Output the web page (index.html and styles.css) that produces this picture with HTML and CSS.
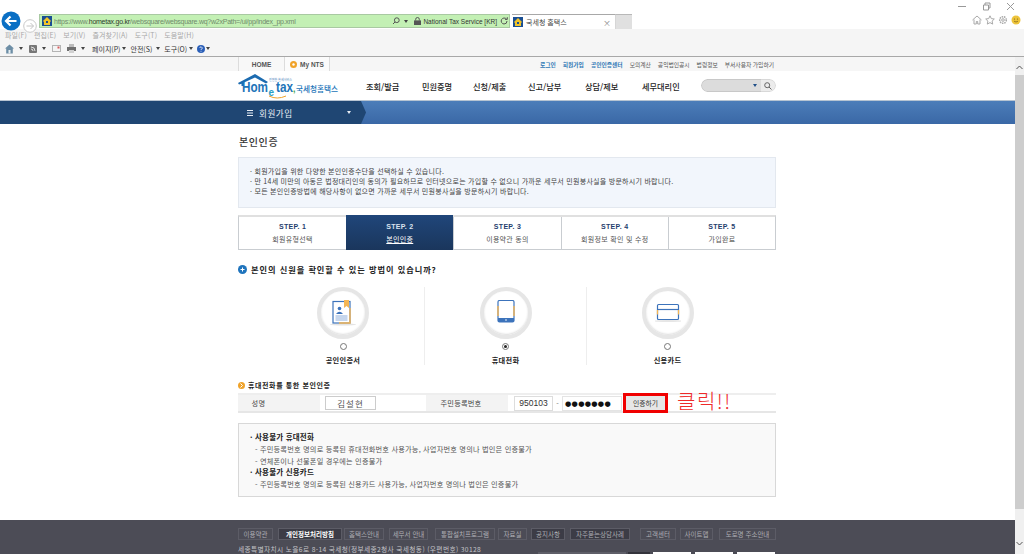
FILE: index.html
```html
<!DOCTYPE html>
<html lang="ko">
<head>
<meta charset="utf-8">
<title>국세청 홈택스</title>
<link rel="stylesheet" href="styles.css">
</head>
<body>
<div class="browser">
  <div class="win-controls">
    <svg width="10" height="3" viewBox="0 0 10 3"><path d="M1 1.500h8" stroke="#999" fill="none"/></svg>
    <svg width="9" height="9" viewBox="0 0 9 9"><path d="M1.500 3h5v5h-5zM3 3V1h5v5H6.500" stroke="#999" fill="none"/></svg>
    <svg width="9" height="9" viewBox="0 0 9 9"><path d="M1 1l7 7M8 1l-7 7" stroke="#999" fill="none"/></svg>
  </div>
  <div class="address-row">
    <div class="nav-back"><svg width="20" height="20" viewBox="0 0 20 20"><circle cx="10" cy="10" r="9.500" fill="#0a6fc4"/><path d="M15.500 10H5.500M9.500 5.500L5 10l4.500 4.500" stroke="#fff" stroke-width="2.200" fill="none"/></svg></div>
    <div class="nav-fwd"><svg width="14" height="14" viewBox="0 0 14 14"><circle cx="7" cy="7" r="6.300" fill="#fff" stroke="#c8c8c8"/><path d="M3.500 7h7M7.500 4l3 3-3 3" stroke="#c4c4c4" fill="none"/></svg></div>
    <div class="address">
      <svg class="favicon" width="10" height="10" viewBox="0 0 10 10"><rect width="10" height="10" fill="#1b4f93"/><path d="M5 1l4 4-1 1v3H2V6L1 5z" fill="#f2c428"/><rect x="4" y="5" width="2" height="2" fill="#1b4f93"/></svg>
      <span class="url"><span class="url-dim">https://www.</span><span class="url-host">hometax.go.kr</span><span class="url-dim">/websquare/websquare.wq?w2xPath=/ui/pp/index_pp.xml</span></span>
      <span class="addr-tools">
        <svg width="8" height="8" viewBox="0 0 8 8"><circle cx="4.800" cy="3.200" r="2.400" fill="none" stroke="#555"/><path d="M3 5L1 7" stroke="#555"/></svg>
        <i class="caret-dark"></i>
        <svg class="lock" width="7" height="8" viewBox="0 0 7 8"><rect y="3.400" width="7" height="4.600" fill="#555"/><path d="M1.700 3.500V2.300a1.800 1.800 0 013.600 0v1.200" fill="none" stroke="#555"/></svg>
        <span class="cert">National Tax Service [KR]</span>
        <svg width="8" height="8" viewBox="0 0 8 8"><path d="M6.600 2.200A3 3 0 104 7a3 3 0 003-3" fill="none" stroke="#555"/><path d="M5 2.400h2.300V.2" fill="none" stroke="#555"/></svg>
      </span>
    </div>
    <div class="tab">
      <svg width="10" height="10" viewBox="0 0 10 10"><rect width="10" height="10" fill="#1b4f93"/><path d="M5 1l4 4-1 1v3H2V6L1 5z" fill="#f2c428"/><rect x="4" y="5" width="2" height="2" fill="#1b4f93"/></svg>
      <span class="tab-title">국세청 홈택스</span>
      <span class="tab-close">×</span>
    </div>
    <div class="new-tab"></div>
    <div class="chrome-icons">
      <svg width="10" height="10" viewBox="0 0 10 10"><path d="M.5 5L5 1l4.500 4M2 4.500V9h2.300V6.500h1.400V9H8V4.500" fill="none" stroke="#a9a9a9"/></svg>
      <svg width="10" height="10" viewBox="0 0 10 10"><path d="M5 .8l1.300 2.800 3 .4-2.200 2.100.6 3L5 7.600 2.300 9.100l.6-3L.7 4l3-.4z" fill="none" stroke="#a9a9a9"/></svg>
      <svg width="10" height="10" viewBox="0 0 10 10"><circle cx="5" cy="5" r="3.300" fill="none" stroke="#a9a9a9" stroke-width="1.500" stroke-dasharray="1.500 .8"/><circle cx="5" cy="5" r="1.300" fill="none" stroke="#a9a9a9"/></svg>
      <svg width="10" height="10" viewBox="0 0 10 10"><circle cx="5" cy="5" r="4.500" fill="#edc33a"/><circle cx="3.500" cy="4" r=".6" fill="#7a6218"/><circle cx="6.500" cy="4" r=".6" fill="#7a6218"/><path d="M3 6.200q2 1.600 4 0" fill="none" stroke="#7a6218" stroke-width=".7"/></svg>
    </div>
  </div>
  <div class="menu-row">
    <span>파일(F)</span><span>편집(E)</span><span>보기(V)</span><span>즐겨찾기(A)</span><span>도구(T)</span><span>도움말(H)</span>
  </div>
  <div class="tool-row">
    <svg width="9" height="10" viewBox="0 0 9 10"><path d="M4.500 .5L9 4.500H7.800V9.500H1.200V4.500H0z" fill="#6d8ea6"/><rect x="3.500" y="6" width="2" height="3.500" fill="#e6eef2"/></svg><i class="caret-dark t1"></i>
    <svg width="8" height="8" viewBox="0 0 8 8"><rect width="8" height="8" rx="1" fill="#777"/><path d="M2 2q4 0 4 4M2 4q2 0 2 2" fill="none" stroke="#fff" stroke-width=".8"/></svg><i class="caret-dark t1"></i>
    <svg width="9" height="7" viewBox="0 0 9 7"><rect x=".5" y=".5" width="8" height="6" fill="#f4f4f4" stroke="#b4b4b4"/><rect x="5.500" y="1.500" width="2" height="2" fill="#d85a5a"/></svg>
    <svg class="t3" width="9" height="9" viewBox="0 0 9 9"><rect x="2" y="0" width="5" height="3" fill="#bcbcbc"/><rect y="3" width="9" height="4" fill="#6f6f6f"/><rect x="2" y="6" width="5" height="3" fill="#d0d0d0"/></svg><i class="caret-dark t1"></i>
    <span class="tool-label first">페이지(P)</span><i class="caret-dark"></i>
    <span class="tool-label safe">안전(S)</span><i class="caret-dark"></i>
    <span class="tool-label">도구(O)</span><i class="caret-dark"></i>
    <svg width="8" height="8" viewBox="0 0 8 8"><circle cx="4" cy="4" r="4" fill="#2b5fb8"/><path d="M2.800 3a1.200 1.200 0 112 1L4 4.800V5.200M4 6v.7" fill="none" stroke="#fff" stroke-width=".8"/></svg><i class="caret-dark t5"></i>
  </div>
</div>

<div class="viewport">
  <div class="page">
    <div class="topnav">
      <div class="wrap topnav-in">
        <div class="topnav-tabs">
          <span class="home-tab">HOME</span>
          <span class="my-tab"><svg width="7" height="7" viewBox="0 0 7 7"><circle cx="3.500" cy="3.500" r="3.500" fill="#f0a32a"/><circle cx="3.500" cy="3.500" r="1.200" fill="#fff"/></svg>My NTS</span>
        </div>
        <div class="toplinks">
          <a class="blue">로그인</a><a class="blue">회원가입</a><a class="blue">공인인증센터</a>
          <a class="plain">모의계산</a><a class="plain">공익법인공시</a><a class="plain">법령정보</a><a class="plain">부서사용자 가입하기</a>
        </div>
      </div>
    </div>

    <div class="header">
      <div class="wrap header-in">
        <svg class="logo" width="102" height="29" viewBox="0 0 102 29">
          <path d="M0 12L17 3l13 8-2 1.500L17 6.500 6 11.500V15H3.500v-2.200L1 13.500z" fill="#1c6bb0"/>
          <text x="31" y="9.500" class="logo-tiny">친절한 실세서비스</text>
          <text x="4" y="21" class="logo-main" textLength="26" lengthAdjust="spacingAndGlyphs">Hom</text>
          <text x="30.500" y="25" class="logo-e">e</text>
          <text x="38" y="21" class="logo-main" textLength="17" lengthAdjust="spacingAndGlyphs">tax</text>
          <text x="55" y="21" class="logo-comma">,</text>
          <path d="M31 25q8 4 17 0" fill="none" stroke="#f0a32a"/>
          <text x="58" y="21" class="logo-kr">국세청홈택스</text>
        </svg>
        <nav class="gnb">
          <a>조회/발급</a><a>민원증명</a><a>신청/제출</a><a>신고/납부</a><a>상담/제보</a><a>세무대리인</a>
        </nav>
        <div class="search">
          <div class="search-field"><i class="caret-blue"></i></div>
          <div class="search-btn"><svg width="8" height="8" viewBox="0 0 8 8"><circle cx="3.200" cy="3.200" r="2.500" fill="none" stroke="#666"/><path d="M5 5l2.500 2.500" stroke="#666"/></svg></div>
        </div>
      </div>
    </div>

    <div class="bluebar">
      <div class="bar-left">
        <div class="bar-title">
          <svg width="6" height="6" viewBox="0 0 6 6"><path d="M0 .5h6M0 3h6M0 5.500h6" stroke="#e8eef5"/></svg>
          <span>회원가입</span>
          <i class="caret-white"></i>
        </div>
      </div>
      <svg class="bar-arrow" width="5" height="23" viewBox="0 0 5 23"><path d="M0 0l5 11.500L0 23z" fill="#1f4673"/></svg>
    </div>

    <div class="wrap content">
      <h1 class="page-title">본인인증</h1>

      <div class="info">
        <p>· 회원가입을 위한 다양한 본인인증수단을 선택하실 수 있습니다.</p>
        <p>· 만 14세 미만의 아동은 법정대리인의 동의가 필요하므로 인터넷으로는 가입할 수 없으니 가까운 세무서 민원봉사실을 방문하시기 바랍니다.</p>
        <p>· 모든 본인인증방법에 해당사항이 없으면 가까운 세무서 민원봉사실을 방문하시기 바랍니다.</p>
      </div>

      <div class="steps">
        <div class="step"><b>STEP. 1</b><span>회원유형선택</span></div>
        <div class="step active"><b>STEP. 2</b><span>본인인증</span></div>
        <div class="step"><b>STEP. 3</b><span>이용약관 동의</span></div>
        <div class="step"><b>STEP. 4</b><span>회원정보 확인 및 수정</span></div>
        <div class="step"><b>STEP. 5</b><span>가입완료</span></div>
      </div>

      <div class="question">
        <svg width="9" height="9" viewBox="0 0 9 9"><circle cx="4.500" cy="4.500" r="4.500" fill="#1f74bd"/><path d="M2.500 4.500h4M4.500 2.500v4" stroke="#fff"/></svg>
        <span>본인의 신원을 확인할 수 있는 방법이 있습니까?</span>
      </div>

      <div class="methods">
        <div class="method">
          <div class="ring">
            <svg width="26" height="26" viewBox="0 0 26 26">
              <ellipse cx="13" cy="24.500" rx="13" ry="1" fill="#e4e4e4"/>
              <rect x="3" y="1.500" width="17" height="21.500" fill="#fff" stroke="#3c73bb" stroke-width="1.200"/>
              <path d="M20 8v15H9" fill="none" stroke="#f5b654" stroke-width="1.400"/>
              <path d="M14 0h5v8l-2.500-2-2.500 2z" fill="#f5b654"/>
              <circle cx="9.500" cy="8.500" r="1.800" fill="#3c73bb"/>
              <path d="M6 14q3.500-4.500 7 0z" fill="#3c73bb"/>
              <path d="M5.500 16h12M5.500 18h12M5.500 20h12" stroke="#8eaedb"/>
            </svg>
          </div>
          <i class="radio"></i>
          <strong>공인인증서</strong>
        </div>
        <div class="method">
          <div class="ring">
            <svg width="26" height="26" viewBox="0 0 26 26">
              <rect x="5" y=".5" width="16" height="21.500" rx="1.500" fill="#fff" stroke="#3c73bb" stroke-width="1.200"/>
              <path d="M5 6v10M21 6v10" stroke="#f5b654" stroke-width="1.400"/>
              <rect x="5" y="18" width="16" height="4" fill="#3c73bb"/>
              <circle cx="13" cy="20" r=".8" fill="#fff"/>
            </svg>
          </div>
          <i class="radio on"></i>
          <strong>휴대전화</strong>
        </div>
        <div class="method">
          <div class="ring">
            <svg width="26" height="26" viewBox="0 0 26 26">
              <ellipse cx="13" cy="21" rx="14" ry="1" fill="#e6e6e6"/>
              <rect x="2.500" y="4.500" width="21" height="15" rx="1" fill="#fff" stroke="#3c73bb" stroke-width="1.200"/>
              <path d="M2.500 9.500h21" stroke="#3c73bb" stroke-width="1.200"/>
              <path d="M2.500 10v4.500M23.500 10v4.500" stroke="#f5b654" stroke-width="1.300"/>
            </svg>
          </div>
          <i class="radio"></i>
          <strong>신용카드</strong>
        </div>
      </div>

      <div class="sub-title">
        <svg width="7" height="7" viewBox="0 0 7 7"><circle cx="3.500" cy="3.500" r="3.500" fill="#f0a32a"/><path d="M2.500 1.500l2 2-2 2" stroke="#fff" fill="none"/></svg>
        <span>휴대전화를 통한 본인인증</span>
      </div>

      <div class="auth-row">
        <span class="auth-label name-label">성명</span>
        <span class="name-box">김설현</span>
        <span class="auth-label rrn-label">주민등록번호</span>
        <span class="rrn-box">950103</span>
        <span class="dash">-</span>
        <span class="pw-box">●●●●●●●</span>
        <span class="auth-btn">인증하기</span>
        <span class="click">클릭!!</span>
      </div>

      <div class="notice">
        <p class="strong">· 사용불가 휴대전화</p>
        <p>- 주민등록번호 명의로 등록된 휴대전화번호 사용가능, 사업자번호 명의나 법인은 인증불가</p>
        <p>- 연체폰이나 선불폰일 경우에는 인증불가</p>
        <p class="strong tight">· 사용불가 신용카드</p>
        <p>- 주민등록번호 명의로 등록된 신용카드 사용가능, 사업자번호 명의나 법인은 인증불가</p>
      </div>
    </div>

    <footer class="footer">
      <div class="wrap">
        <div class="foot-links">
          <a>이용약관</a><a>개인정보처리방침</a><a>홈택스안내</a><a>세무서 안내</a><a>통합설치프로그램</a><a>자료실</a><a>공지사항</a><a>자주묻는상담사례</a><a>고객센터</a><a>사이트맵</a><a>도로명 주소안내</a>
        </div>
        <div class="foot-bottom">
          <span class="foot-addr">세종특별자치시 노을6로 8-14 국세청(정부세종2청사 국세청동) (우편번호) 30128</span>
          <span class="foot-select"></span><span class="foot-go"></span>
          <span class="foot-badge"></span><span class="foot-badge"></span><span class="foot-badge"></span>
        </div>
      </div>
    </footer>
  </div>

  <div class="scrollbar">
    <svg class="sb-arrow up" width="7" height="5" viewBox="0 0 7 5"><path d="M.5 4L3.500 1l3 3" fill="none" stroke="#555"/></svg>
    <div class="sb-thumb"></div>
    <svg class="sb-arrow down" width="7" height="5" viewBox="0 0 7 5"><path d="M.5 1l3 3 3-3" fill="none" stroke="#555"/></svg>
  </div>
</div>
</body>
</html>
```
FILE: styles.css
```css
* { box-sizing: border-box; }
html, body { margin: 0; height: 554px; overflow: hidden; }
body {
  width: 1024px;
  background: #fff;
  font-family: "Noto Sans CJK KR", "Liberation Sans", sans-serif;
  color: #333;
  display: flex;
  flex-direction: column;
}
p, h1 { margin: 0; }
i { display: inline-block; font-style: normal; }

/* browser chrome */
.browser { height: 57px; flex: none; border-bottom: 1px solid #a8a8a8; background: #f5f5f5; position: relative; }
.win-controls {
  position: absolute; right: 9px; top: 2px; display: flex; gap: 15px; align-items: center; z-index: 1;
}
.address-row { height: 29px; background: #fff; display: flex; padding: 14px 0 0 1px; }
.nav-back { width: 20px; height: 20px; margin-top: -3px; }
.nav-fwd { width: 14px; margin: 0 2px; }
.address {
  width: 471px; height: 14px; background: #c3f0b4; border: 1px solid #a9c9a2;
  display: flex; align-items: center; padding-left: 2px; font-family: "Liberation Sans", sans-serif; font-size: 7px; color: #7f927c;
}
.favicon { flex: none; }
.url { margin-left: 2px; white-space: nowrap; letter-spacing: -.25px; }
.url-host { color: #2e3a2c; }
.url-dim { color: #6f8a6b; }
.addr-tools { margin-left: auto; display: flex; align-items: center; gap: 2px; padding-right: 1px; color: #333; font-size: 6.500px; white-space: nowrap; }
.addr-tools .caret-dark { margin: 0 4px 0 2px; }
.cert { margin-right: 1px; }
.tab {
  width: 104px; height: 15px; margin-left: 2px; background: #fff; border-top: 1px solid #a8a8a8;
  border-right: 1px solid #d6d6d6; display: flex; align-items: center; font-size: 7px; padding-left: 1px; color: #444;
}
.tab-title { margin-left: 3px; }
.tab-close { margin-left: auto; margin-right: 4px; color: #888; font-size: 8px; }
.new-tab { width: 16px; height: 15px; background: #e0e0e0; border-top: 1px solid #b8b8b8; }
.chrome-icons { margin-left: auto; display: flex; gap: 3px; padding: 1px 3px 0 0; }
.chrome-icons svg { flex: none; }

.menu-row {
  height: 12px; display: flex; align-items: center; font-size: 7px; color: #a8a8a8; padding-left: 5px;
}
.menu-row span { margin-right: 7px; letter-spacing: .1px; }
.tool-row { height: 15px; padding-left: 5px; display: flex; align-items: center; font-size: 7px; color: #333; }
.tool-label { margin-right: 2px; }
.tool-label.first { margin-left: 1px; }
.tool-label.safe { margin-right: 4px; }
.caret-dark { width: 0; height: 0; border: 2px solid transparent; border-top: 3px solid #444; border-bottom: 0; margin-right: 4px; flex: none; }
.t1 { margin-left: 5px; margin-right: 6px; }
.t3 { margin-left: 6px; }
.t5 { margin-left: 1px; }

/* viewport */
.viewport { flex: 1; display: flex; min-height: 0; }
.page { flex: 1; min-width: 0; overflow: hidden; display: flex; flex-direction: column; }
.wrap { width: 538px; margin-left: 238px; }
.scrollbar {
  width: 9px; flex: none; background: #f0f0f0; display: flex; flex-direction: column; align-items: center; padding-top: 8px;
}
.sb-thumb { width: 9px; height: 434px; background: #cdcdcd; margin-top: 5px; }
.sb-arrow.down { margin-top: 32px; }

/* top nav */
.topnav { height: 14px; background: #f6f6f6; flex: none; }
.topnav-in { display: flex; justify-content: space-between; height: 14px; }
.topnav-tabs { display: flex; }
.home-tab, .my-tab {
  height: 14px; display: flex; align-items: center; justify-content: center; font-family: "Liberation Sans", sans-serif;
  font-size: 6.500px; font-weight: 700; color: #555; border-left: 1px solid #dcdcdc; background: #f8f8f8;
}
.home-tab { width: 46px; }
.my-tab { width: 46px; gap: 3px; border-right: 1px solid #dcdcdc; background: #fbfbfb; }
.toplinks { display: flex; align-items: center; font-size: 5.750px; margin-right: 2px; white-space: nowrap; }
.toplinks a { margin-left: 7px; }
.toplinks .blue { color: #2f78b5; font-weight: 700; }
.toplinks .plain { color: #555; }

/* header */
.header { height: 30px; border-bottom: 1px solid #b7c4d2; flex: none; }
.header-in { display: flex; align-items: center; height: 29px; }
.logo { flex: none; }
.logo-tiny { font-size: 3px; fill: #3f7cb8; font-family: "Noto Sans CJK KR", sans-serif; }
.logo-main { font-family: "Liberation Sans", sans-serif; font-size: 14px; fill: #2274b8; font-weight: 700; }
.logo-e { font-family: "Liberation Sans", sans-serif; font-size: 10px; fill: #2c9fc4; font-weight: 700; }
.logo-comma { font-family: "Liberation Sans", sans-serif; font-size: 9px; fill: #4aa64a; font-weight: 700; }
.logo-kr { font-size: 7.600px; fill: #2274b8; font-weight: 500; }
.gnb { display: flex; margin-left: 26px; font-size: 8.200px; color: #222; font-weight: 500; white-space: nowrap; }
.gnb a:nth-child(1) { width: 56px; }
.gnb a:nth-child(2) { width: 51px; }
.gnb a:nth-child(3) { width: 55px; }
.gnb a:nth-child(4) { width: 57px; }
.gnb a:nth-child(5) { width: 57px; }
.gnb a:nth-child(6) { width: 58px; }
.search { display: flex; height: 13px; margin-left: auto; border-radius: 7px; overflow: hidden; }
.search-field { width: 60px; background: #dcdcdc; border: 1px solid #c8c8c8; border-right: 0; border-radius: 7px 0 0 7px; display: flex; align-items: center; justify-content: flex-end; padding-right: 4px; }
.search-btn { width: 15px; background: #ececec; border: 1px solid #d8d8d8; border-left: 0; display: flex; align-items: center; justify-content: center; border-radius: 0 7px 7px 0; }
.caret-blue { width: 0; height: 0; border: 2px solid transparent; border-top: 3px solid #1f4f88; border-bottom: 0; }

/* blue bar */
.bluebar { height: 23px; flex: none; display: flex; background: linear-gradient(#4c7db9, #3a68a6); }
.bar-left { width: 361px; background: #1f4673; padding-left: 247px; display: flex; align-items: center; }
.bar-title { display: flex; align-items: center; color: #e8eef5; font-size: 8.600px; width: 114px; }
.bar-title span { margin-left: 6px; letter-spacing: .5px; }
.caret-white { width: 0; height: 0; border: 2px solid transparent; border-top: 3px solid #e8eef5; border-bottom: 0; margin-left: auto; margin-right: 10px; }
.bar-arrow { flex: none; }

/* content */
.content { flex: 1; display: flex; flex-direction: column; }
.page-title { font-size: 10px; font-weight: 500; height: 33px; padding-top: 10px; line-height: 15px; color: #333; letter-spacing: .6px; margin-left: 1px; }
.info {
  height: 51px; background: #f2f6fc; border: 1px solid #e3e8ef; padding: 8px 0 0 11px; font-size: 7px; line-height: 10px; color: #444; letter-spacing: .26px; white-space: nowrap;
}
.steps {
  margin-top: 7px; height: 35px; display: grid; grid-template-columns: repeat(5, 1fr);
  border: 1px solid #c9cdd1; border-top: 2px solid #e0e0e0;
}
.step { display: flex; flex-direction: column; align-items: center; padding-top: 4px; font-size: 7px; color: #555; border-left: 1px solid #c9cdd1; line-height: 12px; letter-spacing: .3px; }
.step:first-child { border-left: 0; }
.step b { font-family: "Liberation Sans", sans-serif; font-size: 7px; color: #1f3e6e; letter-spacing: .3px; }
.step.active { background: linear-gradient(#20467a, #1a365c); color: #fff; margin: -2px 0 -1px; padding-top: 6px; border-left: 0; }
.step.active b { color: #d8e2ee; }
.step.active span { text-decoration: underline; color: #fff; }
.question { margin-top: 12px; height: 14px; display: flex; align-items: center; gap: 4px; font-size: 8.200px; font-weight: 700; color: #222; letter-spacing: .95px; }
.methods { margin-top: 11px; height: 80px; display: grid; grid-template-columns: repeat(3, 162px); margin-left: 24px; }
.method { display: flex; flex-direction: column; align-items: center; border-left: 1px solid #eee; width: 162px; height: 78px; }
.method:first-child { border-left: 0; }
.ring {
  width: 52px; height: 52px; border-radius: 50%; border: 4px solid #e6e6e6; box-shadow: inset 0 -1px 2px #ddd;
  display: flex; align-items: center; justify-content: center; background: #fff;
}
.radio { width: 7px; height: 7px; border-radius: 50%; border: 1px solid #777; background: #fff; margin-top: 4px; position: relative; }
.radio.on::after { content: ""; position: absolute; left: 1px; top: 1px; width: 3px; height: 3px; border-radius: 50%; background: #222; }
.method strong { font-size: 7.200px; color: #222; line-height: 10px; margin-top: 5px; letter-spacing: .3px; }
.sub-title { margin-top: 13px; height: 10px; display: flex; align-items: center; gap: 3px; font-size: 7px; font-weight: 700; color: #222; letter-spacing: .6px; }
.auth-row {
  margin-top: 3px; height: 20px; background: #fff; border-top: 2px solid #eee; border-bottom: 2px solid #e6e6e6; display: flex; align-items: center; font-size: 7.200px; color: #444;
}
.auth-label { background: #f3f3f3; align-self: stretch; display: flex; align-items: center; justify-content: center; }
.name-label { width: 82px; padding-right: 41px; letter-spacing: .5px; }
.name-box { width: 51px; height: 14px; margin-left: 5px; border: 1px solid #ccc; display: flex; align-items: center; justify-content: center; font-size: 8.500px; letter-spacing: 1px; color: #555; }
.rrn-label { margin-left: 50px; width: 82px; letter-spacing: .2px; padding-right: 12px; }
.rrn-box { margin-left: 6px; width: 39px; height: 15px; border: 1px solid #ddd; display: flex; align-items: center; justify-content: center; font-family: "Liberation Sans", sans-serif; font-size: 8.500px; color: #333; }
.dash { width: 9px; text-align: center; color: #777; }
.pw-box { width: 60px; height: 15px; border: 1px solid #e4e4e4; display: flex; align-items: center; padding-left: 2px; font-family: "DejaVu Sans", sans-serif; font-size: 7.200px; color: #111; letter-spacing: .3px; white-space: nowrap; }
.auth-btn { margin-left: 1px; width: 45px; height: 20px; background: #e6e6e6; border: 3px solid #f00000; display: flex; align-items: center; justify-content: center; font-size: 6.800px; color: #333; }
.click { margin: -4px 0 0 9px; font-size: 20px; line-height: 20px; color: #ee2a2a; font-weight: 300; letter-spacing: 1.500px; white-space: nowrap; }
.notice {
  margin-top: 10px; height: 74px; background: #f9f9f9; border: 1px solid #d8d8d8; padding: 7px 0 0 11px; font-size: 7.200px; line-height: 11px; color: #555; white-space: nowrap; letter-spacing: .2px;
}
.notice .strong { font-weight: 700; color: #222; font-size: 7.500px; line-height: 12px; }
.notice p:not(.strong) { padding-left: 5px; margin-top: 1px; }
.notice .tight { margin-top: -1px; }

/* footer */
.footer { height: 34px; background: #4c4c56; flex: none; color: #bbb; }
.foot-links { display: flex; padding-top: 8px; font-size: 6.500px; white-space: nowrap; }
.foot-links a { height: 12px; border: 1px solid #5c5c66; display: flex; align-items: center; justify-content: center; margin-right: 4px; color: #aeaeb4; }
.foot-links a:nth-child(1) { width: 35px; margin-right: 5px; }
.foot-links a:nth-child(2) { width: 64px; color: #fff; font-weight: 700; background: #3c3c46; margin-right: 2px; }
.foot-links a:nth-child(3) { width: 40px; margin-right: 5px; }
.foot-links a:nth-child(4) { width: 39px; margin-right: 7px; }
.foot-links a:nth-child(5) { width: 60px; margin-right: 3px; }
.foot-links a:nth-child(6) { width: 29px; }
.foot-links a:nth-child(7) { width: 34px; margin-right: 5px; background: #3c3c46; }
.foot-links a:nth-child(8) { width: 60px; margin-right: 10px; background: #3c3c46; }
.foot-links a:nth-child(9) { width: 36px; }
.foot-links a:nth-child(10) { width: 33px; margin-right: 6px; }
.foot-links a:nth-child(11) { width: 57px; margin-right: 0; }
.foot-bottom { display: flex; align-items: flex-start; margin-top: 5px; height: 9px; font-size: 6.700px; color: #c4c4c8; letter-spacing: .36px; }
.foot-addr { white-space: nowrap; width: 300px; height: 9px; line-height: 9px; }
.foot-select { width: 88px; height: 3px; margin-top: 7px; background: #5e5e68; }
.foot-go { width: 22px; height: 3px; margin: 7px 3px 0 2px; background: #33333b; }
.foot-badge { width: 38px; height: 3px; margin-top: 7px; margin-right: 4px; background: #fff; }
.foot-badge:last-child { margin-right: 0; }
```
